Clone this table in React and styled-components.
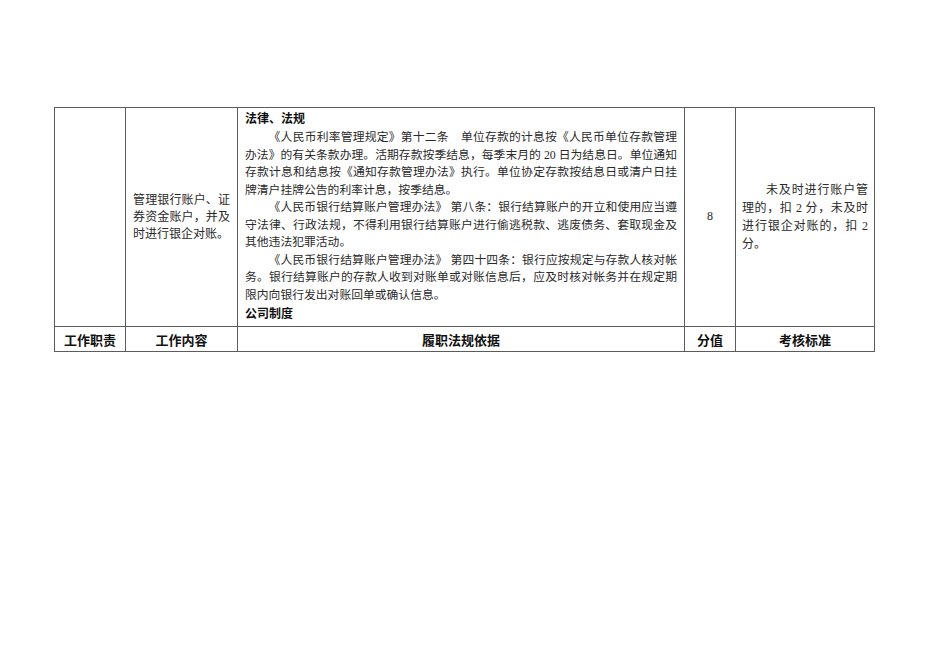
import React from "react";
import styled, { createGlobalStyle } from "styled-components";

const Global = createGlobalStyle`
  html, body { margin: 0; padding: 0; background: #fff; }
  body { font-family: "Liberation Serif", "Noto Sans CJK SC", serif; color: #222; }
`;

const Page = styled.div`
  width: 950px;
  height: 672px;
  padding: 107px 0 0 54px;
  box-sizing: border-box;
`;

const Table = styled.table`
  border-collapse: collapse;
  table-layout: fixed;
  width: 820px;
`;

const Cell = styled.td`
  border: 1px solid #5c5c5c;
  padding: ${(p) => p.$pad || "2px 7px"};
  vertical-align: middle;
  font-size: ${(p) => p.$size || "12px"};
  line-height: 17.5px;
  color: #2a2a2a;
  text-align: ${(p) => p.$align || "left"};
  font-family: "Liberation Serif", "Noto Sans CJK SC", serif;
`;

const Head = styled.td`
  border: 1px solid #5c5c5c;
  height: 24px;
  padding: 0;
  vertical-align: middle;
  text-align: center;
  font-family: "Liberation Sans", "Noto Sans CJK SC", sans-serif;
  font-weight: 700;
  font-size: 13px;
  color: #111;
`;

const Heading = styled.div`
  font-family: "Liberation Sans", "Noto Sans CJK SC", sans-serif;
  font-weight: 700;
  font-size: 12px;
  color: #111;
  line-height: ${(p) => p.$lh || "17.5px"};
`;

const Line = styled.div`
  white-space: nowrap;
  text-align: justify;
  text-align-last: ${(p) => (p.$last ? "left" : "justify")};
  text-indent: ${(p) => (p.$indent ? "2em" : "0")};
  line-height: ${(p) => p.$lh || "17.5px"};
`;

const lawParas = [
  [
    "《人民币利率管理规定》第十二条　单位存款的计息按《人民币单位存款管理",
    "办法》的有关条款办理。活期存款按季结息，每季末月的 20 日为结息日。单位通知",
    "存款计息和结息按《通知存款管理办法》执行。单位协定存款按结息日或清户日挂",
    "牌清户挂牌公告的利率计息，按季结息。",
  ],
  [
    "《人民币银行结算账户管理办法》 第八条：银行结算账户的开立和使用应当遵",
    "守法律、行政法规，不得利用银行结算账户进行偷逃税款、逃废债务、套取现金及",
    "其他违法犯罪活动。",
  ],
  [
    "《人民币银行结算账户管理办法》 第四十四条：银行应按规定与存款人核对帐",
    "务。银行结算账户的存款人收到对账单或对账信息后，应及时核对帐务并在规定期",
    "限内向银行发出对账回单或确认信息。",
  ],
];

const contentLines = ["管理银行账户、证", "券资金账户，并及", "时进行银企对账。"];

const standardLines = [
  "未及时进行账户管",
  "理的，扣 2 分，未及时",
  "进行银企对账的，扣 2",
  "分。",
];

export default function App() {
  return (
    <>
      <Global />
      <Page>
        <Table>
          <colgroup>
            <col style={{ width: 71 }} />
            <col style={{ width: 112 }} />
            <col style={{ width: 447 }} />
            <col style={{ width: 51 }} />
            <col style={{ width: 139 }} />
          </colgroup>
          <tbody>
            <tr style={{ height: 219 }}>
              <Cell />
              <Cell $pad="2px 7px">
                {contentLines.map((t, i) => (
                  <Line key={i} $lh="17px" $last={i === contentLines.length - 1}>
                    {t}
                  </Line>
                ))}
              </Cell>
              <Cell $pad="2px 7px" $size="11.8px">
                <Heading $lh="19px">法律、法规</Heading>
                {lawParas.map((para, pi) =>
                  para.map((t, i) => (
                    <Line key={`${pi}-${i}`} $indent={i === 0} $last={i === para.length - 1}>
                      {t}
                    </Line>
                  ))
                )}
                <Heading $lh="20px">公司制度</Heading>
              </Cell>
              <Cell $align="center">8</Cell>
              <Cell $pad="2px 6px">
                {standardLines.map((t, i) => (
                  <Line key={i} $lh="18px" $indent={i === 0} $last={i === standardLines.length - 1}>
                    {t}
                  </Line>
                ))}
              </Cell>
            </tr>
            <tr>
              <Head>工作职责</Head>
              <Head>工作内容</Head>
              <Head>履职法规依据</Head>
              <Head>分值</Head>
              <Head>考核标准</Head>
            </tr>
          </tbody>
        </Table>
      </Page>
    </>
  );
}
